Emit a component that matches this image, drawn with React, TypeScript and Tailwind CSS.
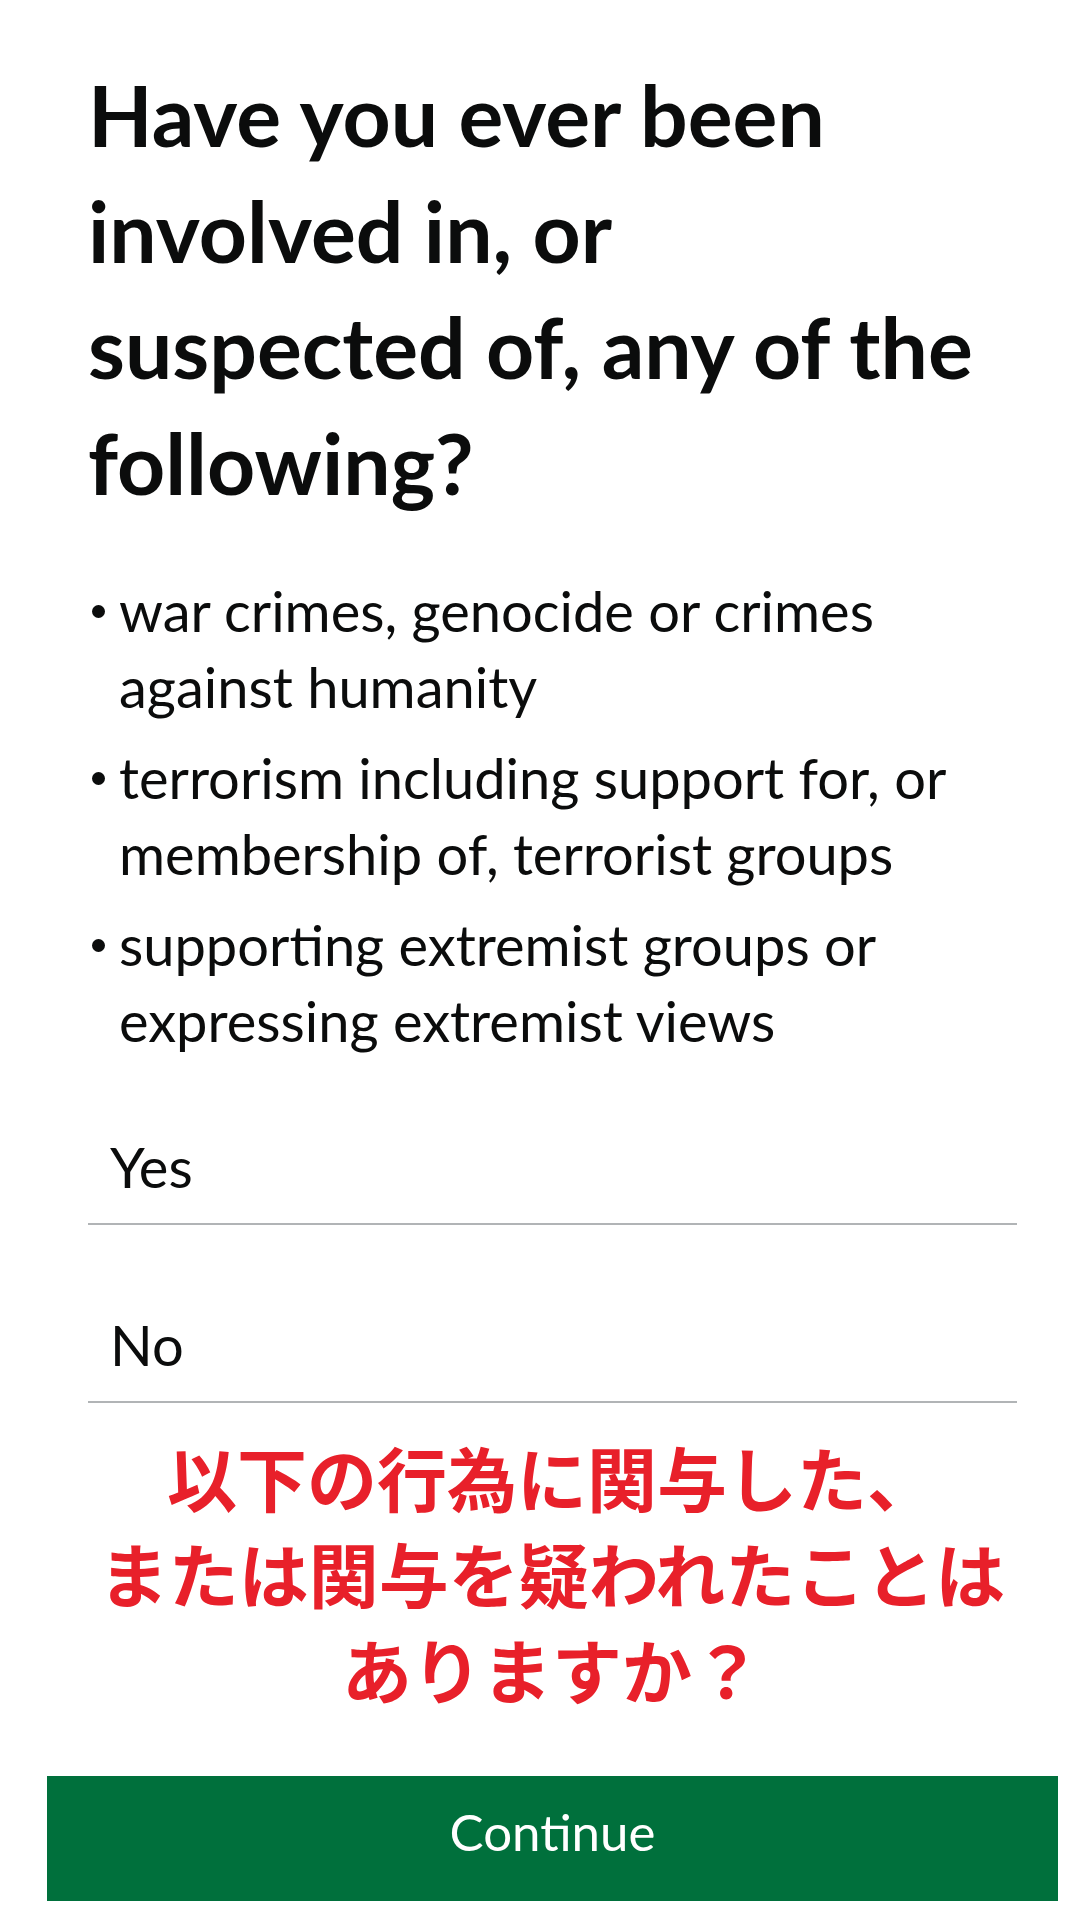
import React from "react";

const items = [
  ["war crimes, genocide or crimes", "against humanity"],
  ["terrorism including support for, or", "membership of, terrorist groups"],
  ["supporting extremist groups or", "expressing extremist views"],
];

const options = ["Yes", "No"];

const App = () => {
  return (
    <div
      className="w-[1080px] h-[1920px] bg-white text-[#0b0c0c] overflow-hidden"
      style={{ fontFamily: "Lato, 'Noto Sans', sans-serif" }}
    >
      <div className="ml-[88px] w-[929px]">
        {/* QUESTION */}
        <h1 className="pt-[57px] text-[84px] leading-[116px] font-bold">
          Have you ever been
          <br />
          involved in, or
          <br />
          suspected of, any of the
          <br />
          following?
        </h1>

        {/* LIST */}
        <ul className="mt-[52px] flex flex-col gap-[15px] text-[56px] leading-[76px]">
          {items.map((lines) => (
            <li key={lines[0]} className="flex">
              <span className="w-[31px] shrink-0">
                <span className="block mt-[32px] ml-[4px] w-[13px] h-[13px] rounded-full bg-[#0b0c0c]" />
              </span>
              <span>
                {lines[0]}
                <br />
                {lines[1]}
              </span>
            </li>
          ))}
        </ul>

        {/* OPTIONS */}
        <div className="mt-[78px]">
          {options.map((label, i) => (
            <div
              key={label}
              className={`pl-[22px] pb-[26px] border-b-2 border-[#b1b4b6] text-[56px] leading-[60px] ${
                i === 0 ? "" : "pt-[90px]"
              }`}
            >
              {label}
            </div>
          ))}
        </div>
      </div>

      {/* TRANSLATION */}
      <p
        className="mt-[26px] pl-[24px] text-center text-[70px] leading-[96px] font-bold text-[#e8202a]"
        style={{ fontFamily: "'Noto Sans CJK JP', sans-serif" }}
      >
        以下の行為に関与した、
        <br />
        または関与を疑われたことは
        <br />
        ありますか？
      </p>

      {/* BUTTON */}
      <button className="mt-[59px] ml-[47px] w-[1011px] h-[125px] pb-[14px] flex items-center justify-center bg-[#00703c] text-white text-[51px] leading-[1.2]">
        Continue
      </button>
    </div>
  );
};

export default App;
